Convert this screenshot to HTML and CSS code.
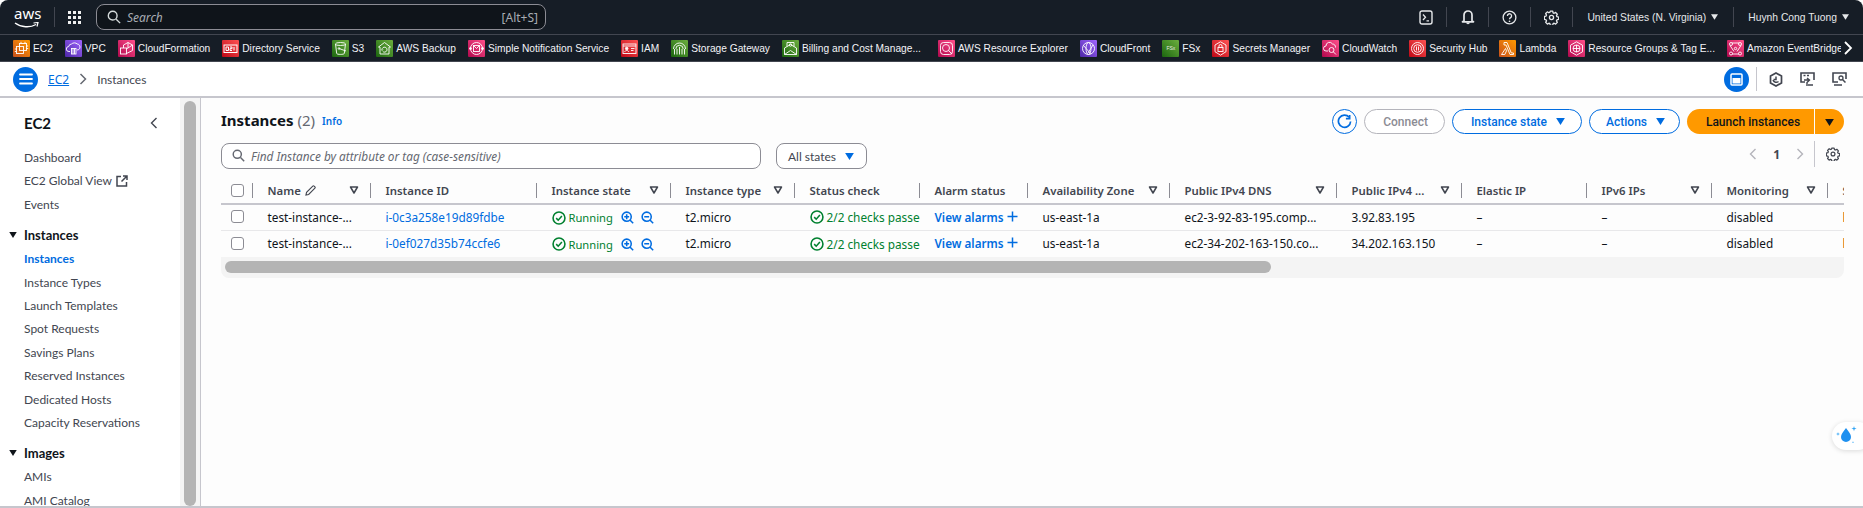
FILE: index.html
```html
<!DOCTYPE html>
<html lang="en">
<head>
    <title>Instances | EC2</title>
    <meta charset="utf-8">
    <link rel="stylesheet" href="styles.css">
</head>
<body>

<svg class="defs" width="0" height="0">
    <symbol id="i-gear" viewBox="0 0 16 16"><path d="M6.700 1.200h2.600l.4 1.800 1.100.5 1.600-.9 1.800 1.800-.9 1.600.5 1.100 1.800.4v2.600l-1.800.4-.5 1.100.9 1.600-1.800 1.800-1.600-.9-1.100.5-.4 1.800H6.700l-.4-1.800-1.100-.5-1.600.9-1.800-1.800.9-1.600-.5-1.100-1.800-.4V6.900l1.800-.4.5-1.100-.9-1.600 1.800-1.800 1.600.9 1.100-.5z" fill="none" stroke="currentColor" stroke-width="1.400" stroke-linejoin="round"/><circle cx="8" cy="8" r="2.200" fill="none" stroke="currentColor" stroke-width="1.400"/></symbol>
    <symbol id="i-sort" viewBox="0 0 10 10"><path d="M1.500 2h7L5 8z" fill="none" stroke="currentColor" stroke-width="1.500" stroke-linejoin="round"/></symbol>
    <symbol id="i-caret" viewBox="0 0 10 8"><path d="M0 0h10L5 8z" fill="currentColor"/></symbol>
    <symbol id="i-ok" viewBox="0 0 16 16"><circle cx="8" cy="8" r="6.800" fill="none" stroke="currentColor" stroke-width="1.800"/><path d="M4.800 8.200l2.300 2.300L11.300 5.800" fill="none" stroke="currentColor" stroke-width="1.800"/></symbol>
    <symbol id="i-zoomin" viewBox="0 0 16 16"><circle cx="7" cy="7" r="5.600" fill="none" stroke="currentColor" stroke-width="1.900"/><path d="M11 11l4 4M4 7h6M7 4v6" fill="none" stroke="currentColor" stroke-width="1.900"/></symbol>
    <symbol id="i-zoomout" viewBox="0 0 16 16"><circle cx="7" cy="7" r="5.600" fill="none" stroke="currentColor" stroke-width="1.900"/><path d="M11 11l4 4M4 7h6" fill="none" stroke="currentColor" stroke-width="1.900"/></symbol>

    <symbol id="s-ec2" viewBox="0 0 17 17"><g fill="none" stroke="#fff" stroke-width=".9"><rect x="6.500" y="3.500" width="7" height="7"/><rect x="3.500" y="6.500" width="7" height="7"/><path d="M8 1.800v1.700M12 1.800v1.700M15.200 6h-1.700M15.200 8.500h-1.700M1.800 9h1.700M1.800 11.500h1.700"/></g></symbol>
    <symbol id="s-vpc" viewBox="0 0 17 17"><g fill="none" stroke="#fff" stroke-width=".9"><path d="M5 11.500H4a2.500 2.500 0 0 1-.3-5 3 3 0 0 1 2.800-2.500c1.400-1.500 4.500-1.500 5.700 0 1.500 0 2.800 1.300 2.800 3 0 1.800-1.200 3-3 3"/><rect x="6.500" y="8.500" width="4.500" height="5.500"/><path d="M8 8.500v5.500M9.500 8.500v5.500"/></g></symbol>
    <symbol id="s-cf" viewBox="0 0 17 17"><g fill="none" stroke="#fff" stroke-width=".9"><rect x="2.500" y="8" width="6" height="6"/><path d="M5.500 8V5l4.500-2.500L14.500 5v5.500l-6 3"/><path d="M10 2.500V8l-1.500.8M10 8l4.500-3"/></g></symbol>
    <symbol id="s-ds" viewBox="0 0 17 17"><g fill="none" stroke="#fff" stroke-width="1"><rect x="2" y="5" width="13" height="7.500"/><path d="M4 7h2.500v3.500H4zM8 7h2v1.700H8v1.800h2M12 7v3.500"/></g></symbol>
    <symbol id="s-s3" viewBox="0 0 17 17"><g fill="none" stroke="#fff" stroke-width=".9"><ellipse cx="8.500" cy="4" rx="5" ry="1.500"/><path d="M3.500 4l1.200 9.500c.5 1.200 7 1.200 7.600 0L13.500 4"/><path d="M7 8.500l7 2.500"/><circle cx="7" cy="8.500" r=".8"/></g></symbol>
    <symbol id="s-backup" viewBox="0 0 17 17"><g fill="none" stroke="#fff" stroke-width=".9"><path d="M8.500 2.500l6 4.500h-1.500v7H4V7H2.500z"/><path d="M6 9.500a2.500 2.500 0 1 1 .8 2M5.300 9.500l.8.9.8-.9"/></g></symbol>
    <symbol id="s-sns" viewBox="0 0 17 17"><g fill="none" stroke="#fff" stroke-width=".9"><circle cx="8.500" cy="8.500" r="6"/><rect x="5.500" y="5.500" width="6" height="6"/><path d="M5.500 5.500l3 3 3-3"/><circle cx="2.500" cy="8.500" r="1" fill="#fff"/><circle cx="14.500" cy="8.500" r="1" fill="#fff"/></g></symbol>
    <symbol id="s-iam" viewBox="0 0 17 17"><g fill="none" stroke="#fff" stroke-width=".9"><rect x="2" y="4" width="13" height="9.500"/><path d="M2 6h13"/><circle cx="5.700" cy="8.500" r="1.300" fill="#fff"/><path d="M3.700 12c.3-2 3.700-2 4 0M10 8.500h3.500M10 10.500h2.500"/></g></symbol>
    <symbol id="s-gateway" viewBox="0 0 17 17"><g fill="none" stroke="#fff" stroke-width=".9"><path d="M2.500 9a6 6 0 0 1 12 0M4.800 9a3.700 3.700 0 0 1 7.400 0"/><path d="M3.500 9v5.500M6 9v5.500M11 9v5.500M13.500 9v5.500"/><path d="M8.500 7v7.500"/></g></symbol>
    <symbol id="s-billing" viewBox="0 0 17 17"><g fill="none" stroke="#fff" stroke-width=".9"><path d="M2.500 8v6.500h12V8l-6-3.500z"/><path d="M2.500 14.500l6-4 6 4M5 6.500V2.500h7v4"/><circle cx="8.500" cy="5" r="1.200"/></g></symbol>
    <symbol id="s-explorer" viewBox="0 0 17 17"><g fill="none" stroke="#fff" stroke-width=".9"><rect x="2.500" y="2.500" width="12" height="12" rx="3"/><circle cx="8" cy="8" r="3.500"/><path d="M10.500 10.500l3.500 3.500"/></g></symbol>
    <symbol id="s-front" viewBox="0 0 17 17"><g fill="none" stroke="#fff" stroke-width=".9"><circle cx="8.500" cy="8.500" r="6"/><ellipse cx="8.500" cy="8.500" rx="2.500" ry="6"/><path d="M3.500 5.500l7 8M13 5l-5 8"/></g></symbol>
    <symbol id="s-secrets" viewBox="0 0 17 17"><g fill="none" stroke="#fff" stroke-width=".9"><path d="M8.500 1.800l5.500 3.200v6.700l-5.500 3.500-5.500-3.500V5z"/><rect x="6" y="7.500" width="5" height="4"/><path d="M7 7.500V6a1.500 1.500 0 0 1 3 0v1.500"/></g></symbol>
    <symbol id="s-watch" viewBox="0 0 17 17"><g fill="none" stroke="#fff" stroke-width=".9"><path d="M6 11H4a2.500 2.500 0 0 1 0-5 3.500 3.500 0 0 1 6.500-2 3 3 0 0 1 3 3.500"/><circle cx="9.500" cy="10" r="2.500"/><path d="M11.300 11.800l2.700 2.700"/></g></symbol>
    <symbol id="s-hub" viewBox="0 0 17 17"><g fill="none" stroke="#fff" stroke-width=".9"><circle cx="8.500" cy="8.500" r="6"/><circle cx="8.500" cy="8.500" r="3.800"/><path d="M7.500 6.500v4M9.500 6.500v4"/></g></symbol>
    <symbol id="s-lambda" viewBox="0 0 17 17"><path d="M5 2.500h3l4.300 10.500H14.500v1.500H11L7 5H5zM6.500 8.500l1 2.400L5.800 14.500H2.500z" fill="none" stroke="#fff" stroke-width=".9"/></symbol>
    <symbol id="s-groups" viewBox="0 0 17 17"><g fill="none" stroke="#fff" stroke-width=".9"><path d="M8.500 1.800l6 3.400v6.600l-6 3.400-6-3.400V5.200z"/><circle cx="8.500" cy="8.500" r="3.500"/><path d="M8.500 5v7M5 8.500h7"/></g></symbol>
    <symbol id="s-bridge" viewBox="0 0 17 17"><g fill="none" stroke="#fff" stroke-width=".9"><path d="M5 3l7 0M3 5.500l4 6M14 5.500l-4 6M5 14h7"/><circle cx="4" cy="4" r="1.500"/><circle cx="13" cy="4" r="1.500"/><circle cx="4" cy="13.500" r="1.500"/><circle cx="13" cy="13.500" r="1.500"/><circle cx="8.500" cy="8.500" r="1.200"/></g></symbol>
</svg>

<header class="top-bar">
    <div class="aws-logo">
        <span class="aws-word">aws</span>
        <svg class="aws-smile" width="26" height="7" viewBox="0 0 26 7"><path d="M1 1c6 4.500 15 5 21 1.500" fill="none" stroke="#fff" stroke-width="1.400"/><path d="M19.500 1l4.500-.5-1 4" fill="none" stroke="#fff" stroke-width="1.200"/></svg>
    </div>
    <span class="top-sep"></span>
    <div class="grid-btn">
        <i></i><i></i><i></i><i></i><i></i><i></i><i></i><i></i><i></i>
    </div>
    <div class="top-search">
        <svg width="14" height="14" viewBox="0 0 16 16"><circle cx="6.500" cy="6.500" r="5" fill="none" stroke="#d5dbdb" stroke-width="1.600"/><path d="M10.500 10.500L15 15" stroke="#d5dbdb" stroke-width="1.600"/></svg>
        <span class="top-search-text">Search</span>
        <span class="top-search-key">[Alt+S]</span>
    </div>
    <div class="top-right">
        <span class="top-icon"><svg width="14" height="15" viewBox="0 0 14 15"><rect x="1" y="1" width="12" height="13" rx="2" fill="none" stroke="#e6e8ea" stroke-width="1.400"/><path d="M4 4.500l2.500 2.800L4 10M7.500 10.800H10" fill="none" stroke="#e6e8ea" stroke-width="1.300"/></svg></span>
        <span class="top-icon"><svg width="14" height="16" viewBox="0 0 14 16"><path d="M3 11.800V6a4 4 0 0 1 8 0v5.800l1.500 1H1.500z" fill="none" stroke="#e6e8ea" stroke-width="1.700" stroke-linejoin="round"/><path d="M5.200 13.500a1.800 1.800 0 0 0 3.600 0" fill="#e6e8ea"/></svg></span>
        <span class="top-icon"><svg width="15" height="15" viewBox="0 0 16 16"><circle cx="8" cy="8" r="6.800" fill="none" stroke="#e6e8ea" stroke-width="1.400"/><path d="M5.800 6.300a2.200 2.200 0 1 1 3.400 1.800c-.8.500-1.200 1-1.200 1.800" fill="none" stroke="#e6e8ea" stroke-width="1.400"/><circle cx="8" cy="12" r=".9" fill="#e6e8ea"/></svg></span>
        <span class="top-icon"><svg class="gear-light" width="15" height="15"><use href="#i-gear"/></svg></span>
        <span class="top-menu">United States (N. Virginia) <svg width="7" height="6"><use href="#i-caret"/></svg></span>
        <span class="top-menu">Huynh Cong Tuong <svg width="7" height="6"><use href="#i-caret"/></svg></span>
    </div>
</header>

<nav class="fav-bar">
    <div class="fav-list">
        <a class="fav"><span class="svc orange"><svg width="17" height="17"><use href="#s-ec2"/></svg></span>EC2</a>
        <a class="fav"><span class="svc purple"><svg width="17" height="17"><use href="#s-vpc"/></svg></span>VPC</a>
        <a class="fav"><span class="svc pink"><svg width="17" height="17"><use href="#s-cf"/></svg></span>CloudFormation</a>
        <a class="fav"><span class="svc red"><svg width="17" height="17"><use href="#s-ds"/></svg></span>Directory Service</a>
        <a class="fav"><span class="svc green"><svg width="17" height="17"><use href="#s-s3"/></svg></span>S3</a>
        <a class="fav"><span class="svc green"><svg width="17" height="17"><use href="#s-backup"/></svg></span>AWS Backup</a>
        <a class="fav"><span class="svc pink"><svg width="17" height="17"><use href="#s-sns"/></svg></span>Simple Notification Service</a>
        <a class="fav"><span class="svc red"><svg width="17" height="17"><use href="#s-iam"/></svg></span>IAM</a>
        <a class="fav"><span class="svc green"><svg width="17" height="17"><use href="#s-gateway"/></svg></span>Storage Gateway</a>
        <a class="fav fav-long"><span class="svc green"><svg width="17" height="17"><use href="#s-billing"/></svg></span>Billing and Cost Manage...</a>
        <a class="fav"><span class="svc pink"><svg width="17" height="17"><use href="#s-explorer"/></svg></span>AWS Resource Explorer</a>
        <a class="fav"><span class="svc purple"><svg width="17" height="17"><use href="#s-front"/></svg></span>CloudFront</a>
        <a class="fav"><span class="svc green">FSx</span>FSx</a>
        <a class="fav"><span class="svc red"><svg width="17" height="17"><use href="#s-secrets"/></svg></span>Secrets Manager</a>
        <a class="fav"><span class="svc pink"><svg width="17" height="17"><use href="#s-watch"/></svg></span>CloudWatch</a>
        <a class="fav"><span class="svc red"><svg width="17" height="17"><use href="#s-hub"/></svg></span>Security Hub</a>
        <a class="fav"><span class="svc orange"><svg width="17" height="17"><use href="#s-lambda"/></svg></span>Lambda</a>
        <a class="fav"><span class="svc pink"><svg width="17" height="17"><use href="#s-groups"/></svg></span>Resource Groups &amp; Tag E...</a>
        <a class="fav"><span class="svc pink"><svg width="17" height="17"><use href="#s-bridge"/></svg></span>Amazon EventBridge</a>
    </div>
    <svg class="fav-more" width="10" height="16" viewBox="0 0 10 16"><path d="M2 2l6 6-6 6" fill="none" stroke="#fff" stroke-width="1.800"/></svg>
</nav>

<div class="crumb-bar">
    <span class="round-btn"><svg width="16" height="14" viewBox="0 0 16 14"><path d="M2 2.500h12M2 7h12M2 11.500h12" stroke="#fff" stroke-width="1.800" stroke-linecap="round"/></svg></span>
    <a class="crumb-link">EC2</a>
    <svg class="crumb-arrow" width="8" height="12" viewBox="0 0 8 12"><path d="M1.500 1l5 5-5 5" fill="none" stroke="#656871" stroke-width="1.500"/></svg>
    <span class="crumb-current">Instances</span>
    <div class="crumb-tools">
        <span class="round-btn"><svg width="13" height="13" viewBox="0 0 13 13"><rect x="1" y="1" width="11" height="11" rx="1" fill="none" stroke="#fff" stroke-width="1.500"/><rect x="2.500" y="5" width="8" height="5.500" fill="#fff"/></svg></span>
        <span class="tool-sep"></span>
        <svg class="tool" width="14" height="15" viewBox="0 0 14 15"><path d="M7 1l5.500 3v7L7 14l-5.500-3V4z" fill="none" stroke="#424650" stroke-width="1.700"/><path d="M7 4.500V7.500H4.500M9.500 9.500A3.500 3.500 0 0 1 4 8" fill="none" stroke="#424650" stroke-width="1.500"/></svg>
        <svg class="tool" width="15" height="15" viewBox="0 0 15 15"><path d="M5 10H1V1h13v7M8 13h5" fill="none" stroke="#424650" stroke-width="1.600"/><path d="M3.500 3.500h2M7 3.500h2M4 8h5M7 6l2.500 2L7 10.500V14" fill="none" stroke="#424650" stroke-width="1.400"/></svg>
        <svg class="tool" width="15" height="15" viewBox="0 0 15 15"><path d="M6 10H1V1h13v6M2 13h8" fill="none" stroke="#424650" stroke-width="1.600"/><circle cx="9" cy="6" r="2" fill="none" stroke="#424650" stroke-width="1.300"/><path d="M10.500 7.500l3 3" stroke="#424650" stroke-width="1.500"/></svg>
    </div>
</div>

<div class="layout">
    <aside class="side-nav">
        <div class="side-head">
            <span class="side-title">EC2</span>
            <svg width="8" height="12" viewBox="0 0 8 12"><path d="M6.500 1l-5 5 5 5" fill="none" stroke="#424650" stroke-width="1.400"/></svg>
        </div>
        <a class="side-link">Dashboard</a>
        <a class="side-link">EC2 Global View <svg class="ext" width="12" height="12" viewBox="0 0 12 12"><path d="M5 1.500H1v9.500h9.500V7M7 1h4v4M11 1L5.500 6.500" fill="none" stroke="#424650" stroke-width="1.500"/></svg></a>
        <a class="side-link">Events</a>
        <div class="side-group"><svg width="8" height="6"><use href="#i-caret"/></svg>Instances</div>
        <a class="side-link active">Instances</a>
        <a class="side-link">Instance Types</a>
        <a class="side-link">Launch Templates</a>
        <a class="side-link">Spot Requests</a>
        <a class="side-link">Savings Plans</a>
        <a class="side-link">Reserved Instances</a>
        <a class="side-link">Dedicated Hosts</a>
        <a class="side-link">Capacity Reservations</a>
        <div class="side-group"><svg width="8" height="6"><use href="#i-caret"/></svg>Images</div>
        <a class="side-link">AMIs</a>
        <a class="side-link">AMI Catalog</a>
    </aside>
    <div class="side-scroll"><div class="side-thumb"></div></div>

    <main class="content">
        <div class="head-row">
            <h1>Instances <span class="count">(2)</span></h1>
            <a class="info">Info</a>
            <div class="actions">
                <span class="refresh"><svg width="15" height="15" viewBox="0 0 16 16"><path d="M13 3.500A6.500 6.500 0 1 0 14.500 8" fill="none" stroke="#006ce0" stroke-width="1.800"/><path d="M9.500 5H13.500V1" fill="none" stroke="#006ce0" stroke-width="1.800"/></svg></span>
                <button class="btn disabled">Connect</button>
                <button class="btn">Instance state <svg width="9" height="7"><use href="#i-caret"/></svg></button>
                <button class="btn btn-actions">Actions <svg width="9" height="7"><use href="#i-caret"/></svg></button>
                <div class="launch">
                    <button class="launch-main">Launch instances</button>
                    <button class="launch-more"><svg width="9" height="7"><use href="#i-caret"/></svg></button>
                </div>
            </div>
        </div>

        <div class="filter-row">
            <div class="find">
                <svg width="13" height="13" viewBox="0 0 16 16"><circle cx="6.500" cy="6.500" r="5" fill="none" stroke="#656871" stroke-width="1.800"/><path d="M10.500 10.500L15 15" stroke="#656871" stroke-width="1.800"/></svg>
                <span>Find Instance by attribute or tag (case-sensitive)</span>
            </div>
            <div class="state-select">All states <svg width="9" height="7"><use href="#i-caret"/></svg></div>
            <div class="pager">
                <svg width="8" height="12" viewBox="0 0 8 12"><path d="M6.500 1l-5 5 5 5" fill="none" stroke="#b4b4bb" stroke-width="1.400"/></svg>
                <b>1</b>
                <svg width="8" height="12" viewBox="0 0 8 12"><path d="M1.500 1l5 5-5 5" fill="none" stroke="#b4b4bb" stroke-width="1.400"/></svg>
                <span class="pager-sep"></span>
                <svg class="pager-gear" width="14" height="14"><use href="#i-gear"/></svg>
            </div>
        </div>

        <div class="table-wrap">
            <table>
                <colgroup>
                    <col class="c-check"><col class="c-name"><col class="c-id"><col class="c-state"><col class="c-type"><col class="c-status"><col class="c-alarm"><col class="c-az"><col class="c-dns"><col class="c-ip"><col class="c-eip"><col class="c-v6"><col class="c-mon"><col class="c-next">
                </colgroup>
                <thead>
                    <tr>
                        <th><div class="th-check"><span class="check"></span></div></th>
                        <th><div class="th-in">Name <svg class="pencil" width="11" height="11" viewBox="0 0 12 12"><path d="M1 11l.7-3L8.500 1.200a1 1 0 0 1 1.400 0l.9.900a1 1 0 0 1 0 1.400L4 10.300z" fill="none" stroke="#424650" stroke-width="1.200"/></svg><svg class="sort" width="10" height="10"><use href="#i-sort"/></svg></div></th>
                        <th><div class="th-in">Instance ID</div></th>
                        <th><div class="th-in">Instance state<svg class="sort" width="10" height="10"><use href="#i-sort"/></svg></div></th>
                        <th><div class="th-in">Instance type<svg class="sort" width="10" height="10"><use href="#i-sort"/></svg></div></th>
                        <th><div class="th-in">Status check</div></th>
                        <th><div class="th-in">Alarm status</div></th>
                        <th><div class="th-in">Availability Zone<svg class="sort" width="10" height="10"><use href="#i-sort"/></svg></div></th>
                        <th><div class="th-in">Public IPv4 DNS<svg class="sort" width="10" height="10"><use href="#i-sort"/></svg></div></th>
                        <th><div class="th-in">Public IPv4 ...<svg class="sort" width="10" height="10"><use href="#i-sort"/></svg></div></th>
                        <th><div class="th-in">Elastic IP</div></th>
                        <th><div class="th-in">IPv6 IPs<svg class="sort" width="10" height="10"><use href="#i-sort"/></svg></div></th>
                        <th><div class="th-in">Monitoring<svg class="sort" width="10" height="10"><use href="#i-sort"/></svg></div></th>
                        <th class="last"><div class="th-in">Security</div></th>
                    </tr>
                </thead>
                <tbody>
                    <tr>
                        <td><span class="check"></span></td>
                        <td>test-instance-...</td>
                        <td><a class="link">i-0c3a258e19d89fdbe</a></td>
                        <td><span class="ok"><svg width="14" height="14"><use href="#i-ok"/></svg>Running</span><span class="zooms"><svg width="13" height="13"><use href="#i-zoomin"/></svg><svg width="13" height="13"><use href="#i-zoomout"/></svg></span></td>
                        <td>t2.micro</td>
                        <td><span class="ok ok-check"><svg width="14" height="14"><use href="#i-ok"/></svg>2/2 checks passed</span></td>
                        <td><a class="alarm">View alarms <svg width="11" height="11" viewBox="0 0 11 11"><path d="M5.500 .5v10M.5 5.500h10" stroke="currentColor" stroke-width="1.500"/></svg></a></td>
                        <td>us-east-1a</td>
                        <td>ec2-3-92-83-195.comp...</td>
                        <td>3.92.83.195</td>
                        <td>–</td>
                        <td>–</td>
                        <td>disabled</td>
                        <td><span class="sg-link">launch</span></td>
                    </tr>
                    <tr>
                        <td><span class="check"></span></td>
                        <td>test-instance-...</td>
                        <td><a class="link">i-0ef027d35b74ccfe6</a></td>
                        <td><span class="ok"><svg width="14" height="14"><use href="#i-ok"/></svg>Running</span><span class="zooms"><svg width="13" height="13"><use href="#i-zoomin"/></svg><svg width="13" height="13"><use href="#i-zoomout"/></svg></span></td>
                        <td>t2.micro</td>
                        <td><span class="ok ok-check"><svg width="14" height="14"><use href="#i-ok"/></svg>2/2 checks passed</span></td>
                        <td><a class="alarm">View alarms <svg width="11" height="11" viewBox="0 0 11 11"><path d="M5.500 .5v10M.5 5.500h10" stroke="currentColor" stroke-width="1.500"/></svg></a></td>
                        <td>us-east-1a</td>
                        <td>ec2-34-202-163-150.co...</td>
                        <td>34.202.163.150</td>
                        <td>–</td>
                        <td>–</td>
                        <td>disabled</td>
                        <td><span class="sg-link">launch</span></td>
                    </tr>
                </tbody>
            </table>
            <div class="h-scroll"><div class="h-thumb"></div></div>
        </div>
    </main>
</div>

<span class="float-pill">
    <svg width="24" height="22" viewBox="0 0 24 22"><path d="M11 3c-3 4-5 6-5 9a5 5 0 0 0 10 0c0-3-2-5-5-9z" fill="#1e90f0"/><path d="M19 1l.6 2 2 .6-2 .6-.6 2-.6-2-2-.6 2-.6zM3 7l.4 1.600 1.600.4-1.600.4L3 11l-.4-1.600L1 9l1.600-.4zM18 16.500l.8.8-.8.8-.8-.8z" fill="#30a4f5"/></svg>
</span>

</body>
</html>
```

FILE: styles.css
```css
* {
  box-sizing: border-box;
}
html, body {
  height: 100%;
}
body {
  margin: 0;
  overflow: hidden;
  font-family: "Noto Sans", "Open Sans", sans-serif;
  font-size: 12px;
  color: #0f141a;
  background: #fdfdfd;
  display: flex;
  flex-direction: column;
}
.defs {
  position: absolute;
}
a {
  text-decoration: none;
}

/* top bar */
.top-bar {
  height: 35px;
  flex: none;
  display: flex;
  align-items: center;
  background: #161d26;
  border-bottom: 1px solid #424650;
  border-radius: 8px 8px 0 0;
  color: #e6e8ea;
  padding-left: 14px;
}
.aws-logo {
  width: 27px;
  height: 25px;
  color: #fff;
}
.aws-word {
  font-size: 15px;
  line-height: 17px;
  display: block;
  text-align: center;
}
.aws-smile {
  display: block;
  margin-top: 0;
}
.top-sep {
  width: 1px;
  height: 20px;
  background: #424650;
  margin-left: 13px;
}
.grid-btn {
  width: 14px;
  display: grid;
  grid-template-columns: repeat(3, 3px);
  gap: 2px;
  margin-left: 13px;
}
.grid-btn i {
  height: 3px;
  background: #f0f0f0;
}
.top-search {
  width: 450px;
  height: 26px;
  margin-left: 14px;
  border: 1px solid #8c8c94;
  border-radius: 8px;
  background: #0f141a;
  display: flex;
  align-items: center;
  padding: 0 7px 0 10px;
  color: #a8acb3;
}
.top-search-text {
  margin-left: 6px;
  font-style: italic;
  flex: 1;
}
.top-right {
  margin-left: auto;
  display: flex;
  align-items: center;
  height: 100%;
}
.top-icon {
  width: 42px;
  height: 20px;
  display: flex;
  align-items: center;
  justify-content: center;
  border-right: 1px solid #424650;
}
.gear-light {
  color: #e6e8ea;
}
.top-menu {
  height: 20px;
  display: flex;
  align-items: center;
  gap: 5px;
  font-family: "Liberation Sans", sans-serif;
  font-size: 10.300px;
  padding: 0 15px 0 14px;
  border-right: 1px solid #424650;
  color: #e6e8ea;
}
.top-menu:last-child {
  border-right: 0;
  padding-right: 14px;
}

/* favorites */
.fav-bar {
  height: 27px;
  flex: none;
  display: flex;
  align-items: center;
  background: #161d26;
  border-bottom: 1px solid #424650;
  padding-left: 13px;
}
.fav-list {
  width: 1828px;
  display: flex;
  gap: 12px;
  overflow: hidden;
  white-space: nowrap;
}
.fav {
  display: flex;
  align-items: center;
  gap: 3px;
  color: #f3f3f7;
  font-family: "Liberation Sans", sans-serif;
  font-size: 10.200px;
}
.fav-long {
  margin-right: 5px;
}
.svc {
  width: 17px;
  height: 17px;
  border-radius: 1px;
  font-size: 5px;
  color: #e8e8e8;
  display: flex;
  align-items: center;
  justify-content: center;
}
.orange { background: linear-gradient(45deg, #c8511b, #ff9900); }
.purple { background: linear-gradient(45deg, #4d27a8, #a166ff); }
.pink { background: linear-gradient(45deg, #b0084d, #ff4f8b); }
.red { background: linear-gradient(45deg, #bd0816, #ff5252); }
.green { background: linear-gradient(45deg, #1b660f, #6cae3e); }
.fav-more {
  margin-left: 2px;
}

/* breadcrumb */
.crumb-bar {
  height: 36px;
  flex: none;
  display: flex;
  align-items: center;
  background: #fff;
  border-bottom: 2px solid #c6c6cd;
  padding: 0 16px 0 13px;
}
.round-btn {
  width: 25px;
  height: 25px;
  border-radius: 50%;
  background: #006ce0;
  display: flex;
  align-items: center;
  justify-content: center;
}
.crumb-link {
  margin-left: 10px;
  color: #006ce0;
  text-decoration: underline;
}
.crumb-arrow {
  margin: 0 10px;
}
.crumb-current {
  color: #424650;
  font-family: Lato, sans-serif;
}
.crumb-tools {
  margin-left: auto;
  display: flex;
  align-items: center;
}
.tool-sep {
  width: 1px;
  height: 24px;
  background: #c6c6cd;
  margin: 0 6px 0 7px;
}
.tool {
  margin-left: 6px;
  margin-right: 11px;
}
.tool:last-child {
  margin-right: 0;
}

/* sidebar */
.layout {
  flex: 1;
  min-height: 0;
  display: flex;
  border-bottom: 2px solid #c6c6cd;
}
.side-nav {
  width: 180px;
  flex: none;
  background: #fff;
  padding: 14px 0 0 24px;
  overflow: hidden;
  font-family: Lato, sans-serif;
}
.side-head {
  display: flex;
  align-items: center;
  justify-content: space-between;
  height: 22px;
  padding-right: 22px;
  margin-bottom: 12px;
}
.side-title {
  font-size: 15px;
  font-weight: 700;
}
.side-link {
  display: block;
  color: #424650;
  height: 23.400px;
  line-height: 23px;
  white-space: nowrap;
}
.side-link.active {
  color: #006ce0;
  font-weight: 700;
}
.ext {
  vertical-align: -2px;
  margin-left: 1px;
}
.side-group {
  position: relative;
  font-weight: 700;
  font-size: 13px;
  line-height: 24px;
  margin-top: 7px;
}
.side-group svg {
  position: absolute;
  left: -15px;
  top: 9px;
}
.side-scroll {
  width: 21px;
  flex: none;
  background: #f4f4f4;
  border-right: 1px solid #c6c6cd;
  padding: 3px 4px 0;
}
.side-thumb {
  height: 100%;
  width: 12px;
  border-radius: 6px;
  background: #b4b4b4;
}

/* main */
.content {
  flex: 1;
  min-width: 0;
  padding: 11px 19px 0 20px;
}
.head-row {
  display: flex;
  align-items: center;
  height: 25px;
}
h1 {
  margin: 0 0 3px;
  font-size: 15px;
  font-weight: 700;
}
.count {
  font-weight: 400;
  color: #656871;
}
.info {
  margin-left: 7px;
  margin-bottom: 2px;
  font-size: 10px;
  font-weight: 600;
  color: #006ce0;
}
.actions {
  margin-left: auto;
  display: flex;
  align-items: center;
  gap: 7px;
}
.refresh {
  width: 25px;
  height: 25px;
  border: 1px solid #006ce0;
  border-radius: 50%;
  display: flex;
  align-items: center;
  justify-content: center;
}
.btn {
  height: 25px;
  border: 1px solid #006ce0;
  border-radius: 13px;
  background: #fff;
  color: #006ce0;
  font: 500 12px Roboto, sans-serif;
  padding: 0 16px 0 18px;
  display: flex;
  align-items: center;
  gap: 9px;
}
.btn-actions {
  padding: 0 14px 0 16px;
}
.btn.disabled {
  border-color: #b4b4bb;
  color: #8c8c94;
}
.launch {
  display: flex;
  height: 25px;
}
.launch button {
  border: 0;
  background: #ff9900;
  color: #0f141a;
  font: 500 12px Roboto, sans-serif;
  padding: 0;
}
.launch .launch-main {
  width: 127px;
  padding-left: 5px;
  border-radius: 13px 0 0 13px;
}
.launch-more {
  width: 29px;
  margin-left: 1px;
  border-radius: 0 13px 13px 0;
}
.filter-row {
  display: flex;
  height: 26px;
  margin-top: 9px;
}
.find {
  width: 540px;
  height: 26px;
  border: 1px solid #8c8c94;
  border-radius: 8px;
  background: #fff;
  display: flex;
  align-items: center;
  gap: 6px;
  padding: 0 0 1px 10px;
  color: #656871;
  font-style: italic;
  font-size: 11.800px;
}
.state-select {
  height: 26px;
  margin-left: 15px;
  border: 1px solid #8c8c94;
  border-radius: 8px;
  background: #fff;
  display: flex;
  align-items: center;
  gap: 9px;
  padding: 0 12px 0 11px;
  color: #424650;
  font-family: Lato, sans-serif;
}
.state-select svg {
  color: #006ce0;
}
.pager {
  margin-left: auto;
  margin-top: -2px;
  height: 26px;
  display: flex;
  align-items: center;
  color: #424650;
  padding-right: 4px;
}
.pager b {
  margin: 0 16px;
}
.pager-sep {
  width: 1px;
  height: 26px;
  background: #c6c6cd;
  margin: 0 11px 0 10px;
}

/* table */
.table-wrap {
  margin-top: 8px;
  width: 1623px;
  overflow: hidden;
}
table {
  width: 1623px;
  table-layout: fixed;
  border-collapse: collapse;
}
.c-check { width: 32px; }
.c-name { width: 118px; }
.c-id { width: 166px; }
.c-state { width: 134px; }
.c-type { width: 124px; }
.c-status { width: 125px; }
.c-alarm { width: 108px; }
.c-az { width: 142px; }
.c-dns { width: 167px; }
.c-ip, .c-eip, .c-v6 { width: 125px; }
.c-mon { width: 116px; }
.c-next { width: 16px; }
th {
  height: 27px;
  padding: 0;
  text-align: left;
  color: #424650;
  font-size: 11.400px;
  font-weight: 600;
  border-bottom: 2px solid #c6c6cd;
  white-space: nowrap;
  overflow: hidden;
}
.th-in, .th-check {
  height: 15px;
  display: flex;
  align-items: center;
  border-right: 1px solid #8c8c94;
}
.th-in {
  padding: 0 11px 0 14.500px;
}
.th-check {
  padding-left: 10px;
}
.last .th-in {
  border-right: 0;
}
td:first-child {
  padding-left: 10px;
}
.pencil {
  margin-left: 4px;
}
.sort {
  margin-left: auto;
  color: #424650;
}
td {
  height: 26.500px;
  padding: 0 0 2px 14.500px;
  font-size: 11.800px;
  border-bottom: 1px solid #e8e8ea;
  white-space: nowrap;
  overflow: hidden;
}
tbody tr:last-child td {
  border-bottom: 0;
}
.check {
  display: block;
  width: 13px;
  height: 13px;
  border: 1px solid #8c8c94;
  border-radius: 3px;
  background: #fff;
}
.link {
  color: #006ce0;
}
.ok {
  display: inline-flex;
  align-items: center;
  gap: 3px;
  color: #00802f;
  font-size: 11.200px;
  vertical-align: middle;
}
.ok-check {
  font-size: 11.800px;
}
.zooms {
  display: inline-flex;
  gap: 7px;
  margin-left: 8px;
  color: #006ce0;
  vertical-align: middle;
}
.alarm {
  color: #006ce0;
  font-weight: 600;
  font-size: 11.700px;
}
.sg-link {
  color: #a84b00;
}
.h-scroll {
  height: 21px;
  background: #f4f4f4;
  border-radius: 0 0 8px 8px;
  padding: 4px;
}
.h-thumb {
  width: 1046px;
  height: 12px;
  border-radius: 6px;
  background: #b4b4b4;
}

.float-pill {
  position: absolute;
  left: 1832px;
  top: 422px;
  width: 40px;
  height: 28px;
  background: #fff;
  border-radius: 14px;
  box-shadow: 0 1px 5px rgba(0, 0, 0, .14);
  padding: 3px 0 0 3px;
}
```
